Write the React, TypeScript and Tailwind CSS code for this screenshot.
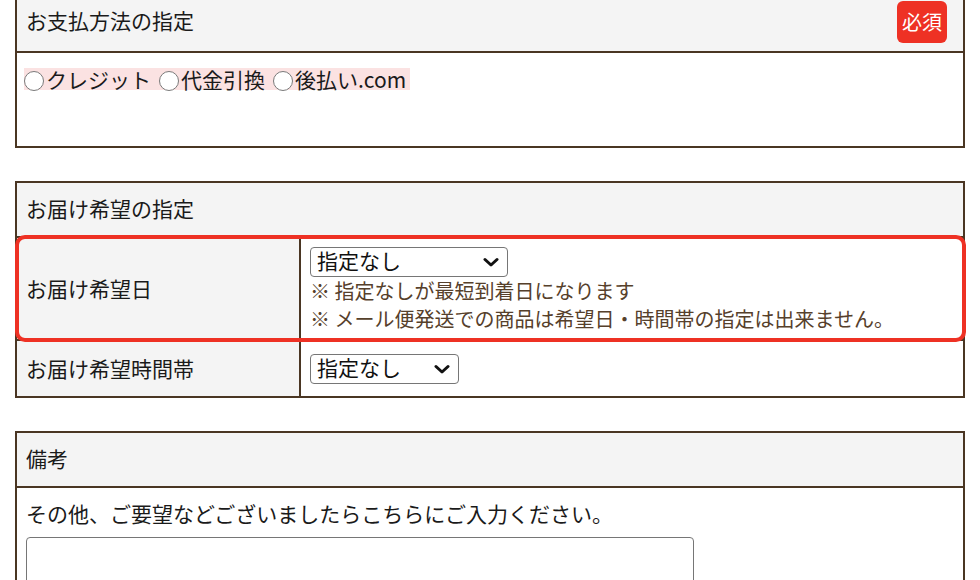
import React from 'react';

const font = { fontFamily: '"Noto Sans CJK JP", "Noto Sans", sans-serif' };

function Select({ width }: { width: string }) {
  return (
    <div
      className={`${width} h-[30px] flex items-center justify-between border border-[#767676] rounded-[4px] bg-white pl-[6px] pr-[8px] text-[21px] leading-none text-[#111]`}
    >
      <span className="-mt-[3px]">指定なし</span>
      <svg width="16" height="12" viewBox="0 0 16 12">
        <path d="M2 3.5 L8 9 L14 3.5" fill="none" stroke="#111" strokeWidth="3" strokeLinecap="round" strokeLinejoin="round" />
      </svg>
    </div>
  );
}

function Radio({ label }: { label: string }) {
  return (
    <span className="inline-flex items-center">
      <span className="inline-block w-[20px] h-[20px] rounded-full border-[1.5px] border-[#7a7a7a] bg-white mt-[4px] mr-[2px]" />
      <span>{label}</span>
    </span>
  );
}

export default function App() {
  return (
    <div className="w-[980px] h-[580px] overflow-hidden bg-white text-[#1a1a1a]" style={font}>
      {/* お支払方法 */}
      <div className="ml-[15px] w-[950px] mt-[-10px] border-2 border-[#4a3623]">
        <div className="h-[61px] bg-[#f4f4f4] border-b-2 border-[#4a3623] flex items-center justify-between pl-[9px] pr-[16px]">
          <span className="text-[21px] -mt-[2px]">お支払方法の指定</span>
          <span className="bg-[#ee3124] text-white text-[20px] leading-none rounded-[6px] px-[5px] h-[42px] flex items-center">必須</span>
        </div>
        <div className="h-[93px] pt-[15px] pl-[7px]">
          <div className="inline-flex items-center gap-[8px] bg-[#fbe2e2] text-[21px] leading-[22px] h-[22px] pr-[4px]">
            <Radio label="クレジット" />
            <Radio label="代金引換" />
            <Radio label="後払い.com" />
          </div>
        </div>
      </div>

      {/* お届け希望 */}
      <div className="ml-[15px] w-[950px] mt-[33px] border-2 border-[#4a3623]">
        <div className="h-[55px] bg-[#f4f4f4] border-b-2 border-[#4a3623] flex items-center pl-[9px] text-[21px]">
          <span className="-mt-[2px]">お届け希望の指定</span>
        </div>
        <div className="relative flex h-[103px] border-b-2 border-[#4a3623]">
          <div className="w-[284px] bg-[#f4f4f4] border-r-2 border-[#4a3623] flex items-center pl-[9px] text-[21px]">
            お届け希望日
          </div>
          <div className="flex-1 pt-[9px] pl-[9px]">
            <Select width="w-[198px]" />
            <div className="text-[20px] leading-[28px] text-[#56402b]">
              <div>※ 指定なしが最短到着日になります</div>
              <div>※ メール便発送での商品は希望日・時間帯の指定は出来ません。</div>
            </div>
          </div>
          <div className="absolute left-[-2px] right-[-3px] top-[-3px] bottom-[-3px] border-4 border-[#ee3124] rounded-[10px] pointer-events-none" />
        </div>
        <div className="flex h-[55px]">
          <div className="w-[284px] bg-[#f4f4f4] border-r-2 border-[#4a3623] flex items-center pl-[9px] text-[21px]">
            お届け希望時間帯
          </div>
          <div className="flex-1 flex items-center pl-[9px]">
            <Select width="w-[149px]" />
          </div>
        </div>
      </div>

      {/* 備考 */}
      <div className="ml-[15px] w-[950px] mt-[33px] border-2 border-[#4a3623]">
        <div className="h-[55px] bg-[#f4f4f4] border-b-2 border-[#4a3623] flex items-center pl-[9px] text-[21px]">
          <span className="-mt-[2px]">備考</span>
        </div>
        <div className="pl-[9px] pt-[11px]">
          <div className="text-[21px] leading-[28px]">その他、ご要望などございましたらこちらにご入力ください。</div>
          <div className="mt-[10px] w-[668px] h-[120px] border border-[#767676] rounded-[4px] bg-white" />
        </div>
      </div>
    </div>
  );
}
